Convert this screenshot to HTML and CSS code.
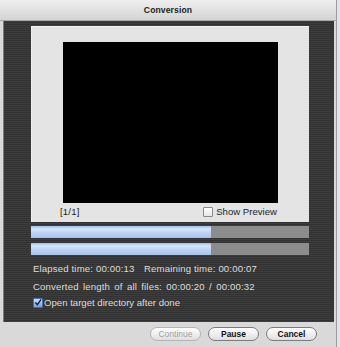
FILE: index.html
```html
<!DOCTYPE html>
<html lang="en">
<head>
    <meta charset="UTF-8">
    <title>Conversion</title>
    <link rel="stylesheet" href="styles.css">
</head>
<body>
    <div class="window">
        <div class="titlebar">Conversion</div>
        <div class="panel">
            <div class="frame">
                <div class="preview"></div>
                <div class="frame-footer">
                    <span class="counter">[1/1]</span>
                    <label class="check check-dark">
                        <span class="box"></span>
                        Show Preview
                    </label>
                </div>
            </div>
            <div class="bar"><div class="fill" style="width: 180px;"></div></div>
            <div class="bar"><div class="fill" style="width: 180px;"></div></div>
            <div class="info">
                <p><span class="elapsed">Elapsed time: 00:00:13</span>Remaining time: 00:00:07</p>
                <p class="total">Converted length of all files: 00:00:20 / 00:00:32</p>
                <label class="check">
                    <span class="box checked">
                        <svg width="9" height="9" viewBox="0 0 9 9"><path d="M1.5 4.5 L3.8 7 L8 1" fill="none" stroke="#1a1a40" stroke-width="1.6"/></svg>
                    </span>
                    Open target directory after done
                </label>
            </div>
        </div>
        <div class="buttons">
            <button class="btn" disabled>Continue</button>
            <button class="btn">Pause</button>
            <button class="btn">Cancel</button>
        </div>
    </div>
</body>
</html>
```

FILE: styles.css
```css
* {
    margin: 0;
    padding: 0;
    box-sizing: border-box;
    font-family: 'Liberation Sans', Arial, sans-serif;
}

body {
    background-color: #e4e4e4;
    width: 340px;
    height: 347px;
    overflow: hidden;
}

.window {
    width: 337px;
    height: 347px;
    background: #d9d9d9;
    border-right: 1px solid #9a9aa6;
}

.titlebar {
    height: 21px;
    background: linear-gradient(to bottom, #efefef, #d4d4d4);
    border-bottom: 1px solid #a8a8a8;
    text-align: center;
    font-size: 8.6px;
    font-weight: bold;
    color: #222;
    line-height: 21px;
    letter-spacing: 0.1px;
}

.panel {
    margin: 0 2px 0 3px;
    height: 301px;
    padding: 5px 0 0 27px;
    border-left: 1px solid #7a7a7a;
    background: repeating-linear-gradient(to bottom, #3d3d3d 0, #3d3d3d 1px, #323232 1px, #323232 2px);
}

.frame {
    width: 278px;
    height: 196px;
    background: #e4e4e4;
    border-top: 1px solid #f2f2f2;
    border-left: 1px solid #f0f0f0;
    padding: 15px 0 0 31px;
}

.preview {
    width: 215px;
    height: 161px;
    background: #000;
}

.frame-footer {
    display: flex;
    justify-content: space-between;
    align-items: center;
    width: 215px;
    margin-left: -3px;
    height: 17px;
    font-size: 9.5px;
    color: #222;
}

.counter {
    letter-spacing: 0.2px;
}

.check {
    display: flex;
    align-items: center;
    gap: 3px;
    font-size: 9.6px;
}

.check-dark {
    color: #222;
    margin-right: -2px;
}

.box {
    width: 10px;
    height: 10px;
    border: 1px solid #8a8a8a;
    border-radius: 1px;
    background: linear-gradient(to bottom, #ffffff, #e6e6e6);
    display: flex;
    align-items: center;
    justify-content: center;
}

.box.checked {
    background: linear-gradient(to bottom, #cfe2f8, #6fa0e0);
    border-color: #4a6fa8;
}

.bar {
    width: 278px;
    height: 12px;
    margin-top: 4px;
    background: #8c8c8c;
}

.bar + .bar {
    margin-top: 5px;
}

.fill {
    height: 100%;
    background: linear-gradient(to bottom, #9cc0ec 0, #d6e6fa 25%, #bcd4f4 55%, #a6c4ee 100%);
}

.info {
    padding: 5px 0 0 2px;
    color: #dedede;
    font-size: 9.6px;
}

.info p {
    height: 17.5px;
    line-height: 17px;
    letter-spacing: 0.15px;
}

.info .total {
    word-spacing: 1.5px;
}

.elapsed {
    display: inline-block;
    width: 111px;
}

.info .check {
    gap: 1px;
    height: 15px;
}

.buttons {
    display: flex;
    justify-content: flex-end;
    gap: 7px;
    padding: 5px 19px 0 0;
}

.btn {
    width: 51px;
    height: 14px;
    border: 1px solid #7c7c7c;
    border-radius: 8px;
    background: linear-gradient(to bottom, #ffffff, #f0f0f0 50%, #dedede);
    font-size: 8.5px;
    font-weight: bold;
    color: #111;
}

.btn:disabled {
    color: #a0a0a0;
    border-color: #b4b4b4;
    font-weight: normal;
}
```
